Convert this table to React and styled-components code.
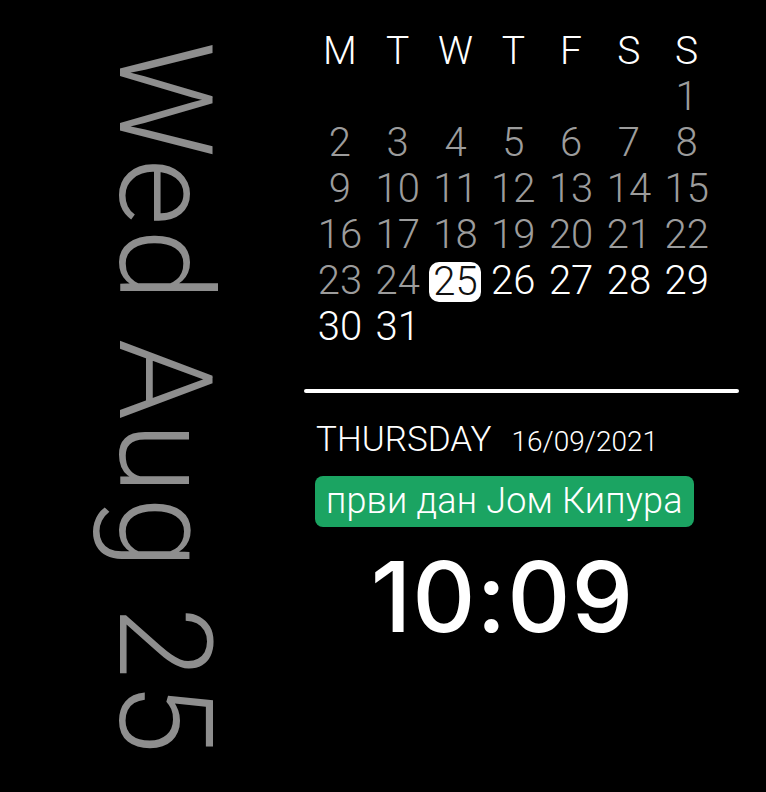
import React from "react";
import styled, { createGlobalStyle } from "styled-components";

const GlobalStyle = createGlobalStyle`
  html, body {
    margin: 0;
    padding: 0;
    background: #000000;
  }
`;

const DAYS = ["M", "T", "W", "T", "F", "S", "S"];
const TODAY = 25;
const FIRST_OFFSET = 6; // 1st of the month falls on Sunday
const DAYS_IN_MONTH = 31;

const App = () => {
  const cells = [];
  for (let i = 0; i < FIRST_OFFSET; i++) cells.push(null);
  for (let d = 1; d <= DAYS_IN_MONTH; d++) cells.push(d);

  return (
    <>
      <GlobalStyle />
      <Screen>
        <SideColumn>
          <VerticalDate>Wed Aug 25</VerticalDate>
        </SideColumn>
        <MainColumn>
          <CalendarGrid>
            {DAYS.map((d, i) => (
              <DayHead key={"h" + i}>{d}</DayHead>
            ))}
            {cells.map((d, i) =>
              d === null ? (
                <DayCell key={"c" + i} />
              ) : (
                <DayCell key={"c" + i} $past={d < TODAY}>
                  {d === TODAY ? <TodayBadge>{d}</TodayBadge> : d}
                </DayCell>
              )
            )}
          </CalendarGrid>
          <Divider />
          <DateRow>
            <Weekday>THURSDAY</Weekday>
            <DateText>16/09/2021</DateText>
          </DateRow>
          <EventPill>први дан Јом Кипура</EventPill>
          <Clock>10:09</Clock>
        </MainColumn>
      </Screen>
    </>
  );
};

const Screen = styled.div`
  width: 766px;
  height: 792px;
  background: #000000;
  display: flex;
  overflow: hidden;
`;

const SideColumn = styled.div`
  width: 304px;
  flex-shrink: 0;
  padding: 41px 0 0 99px;
  box-sizing: border-box;
`;

const VerticalDate = styled.div`
  writing-mode: vertical-rl;
  font-family: Roboto, "Noto Sans", sans-serif;
  font-weight: 300;
  font-size: 130px;
  line-height: 130px;
  letter-spacing: 3px;
  color: #8e8e8e;
  white-space: nowrap;
`;

const MainColumn = styled.div`
  width: 435px;
  display: flex;
  flex-direction: column;
  padding-top: 28px;
`;

const CalendarGrid = styled.div`
  display: grid;
  grid-template-columns: repeat(7, 57.8px);
  grid-auto-rows: 46px;
  padding-left: 7px;
  font-family: Roboto, "Noto Sans", sans-serif;
  font-weight: 300;
  font-size: 40px;
  line-height: 46px;
`;

const DayHead = styled.div`
  text-align: center;
  color: #ffffff;
  font-size: 39px;
`;

const DayCell = styled.div`
  display: flex;
  align-items: center;
  justify-content: center;
  color: ${(p) => (p.$past ? "#9c9c9c" : "#ffffff")};
`;

const TodayBadge = styled.span`
  display: flex;
  align-items: center;
  justify-content: center;
  width: 52px;
  height: 40px;
  border-radius: 10px;
  background: #ffffff;
  color: #111111;
  margin-top: 2px;
`;

const Divider = styled.div`
  height: 4px;
  margin-top: 39px;
  background: #ffffff;
  border-radius: 2px;
`;

const DateRow = styled.div`
  display: flex;
  align-items: baseline;
  gap: 20px;
  margin-top: 26px;
  padding-left: 12px;
  font-family: Roboto, "Noto Sans", sans-serif;
  font-weight: 300;
  color: #ffffff;
  line-height: 42px;
`;

const Weekday = styled.span`
  font-size: 35px;
`;

const DateText = styled.span`
  font-size: 28px;
`;

const EventPill = styled.div`
  align-self: flex-start;
  margin: 13px 0 0 11px;
  padding: 0 11px;
  height: 51px;
  line-height: 51px;
  border-radius: 8px;
  background: #1ba462;
  color: #ffffff;
  font-family: Roboto, "Noto Sans", sans-serif;
  font-weight: 300;
  font-size: 36px;
  letter-spacing: 0.2px;
  white-space: nowrap;
`;

const Clock = styled.div`
  margin-top: 21px;
  padding-right: 38px;
  text-align: center;
  font-family: Inter, Roboto, sans-serif;
  font-weight: 500;
  font-size: 98px;
  line-height: 98px;
  letter-spacing: 1px;
  color: #ffffff;
`;

export default App;
